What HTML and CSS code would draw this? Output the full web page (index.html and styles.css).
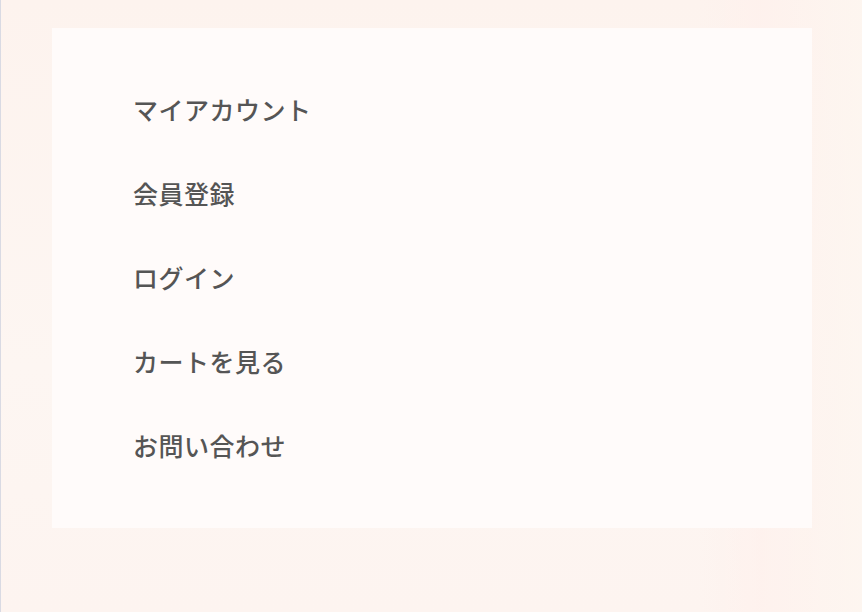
FILE: index.html
```html
<!DOCTYPE html>
<html lang="ja">
<head>
<meta charset="utf-8">
<link rel="stylesheet" href="styles.css">
</head>
<body>
<div class="page">
  <nav class="panel">
    <ul class="menu">
      <li class="menu-item">マイアカウント</li>
      <li class="menu-item">会員登録</li>
      <li class="menu-item">ログイン</li>
      <li class="menu-item">カートを見る</li>
      <li class="menu-item">お問い合わせ</li>
    </ul>
  </nav>
</div>
</body>
</html>
```
FILE: styles.css
```css
html, body {
  margin: 0;
  padding: 0;
}
body {
  width: 862px;
  height: 612px;
  overflow: hidden;
  background-color: #fdf5f1;
  background-image:
    linear-gradient(90deg, transparent 0, transparent 700px, rgba(255,240,236,0.6) 760px, rgba(253,246,240,0.8) 862px),
    linear-gradient(180deg, #fdf3ee 0, #fdf6f2 60%, #fdf4f0 100%);
  font-family: "Noto Sans CJK JP", "Noto Sans", sans-serif;
}
.page {
  height: 612px;
  box-sizing: border-box;
  border-left: 1px solid #d9dae3;
  padding: 28px 0 0 51px;
}
.panel {
  width: 760px;
  height: 500px;
  box-sizing: border-box;
  background: #fffbfa;
  padding: 62px 0 0 81px;
}
.menu {
  list-style: none;
  margin: 0;
  padding: 0;
  display: flex;
  flex-direction: column;
  gap: 46px;
}
.menu-item {
  font-size: 25px;
  line-height: 38px;
  height: 38px;
  color: #555555;
  letter-spacing: 0.5px;
  font-weight: 500;
}
```
